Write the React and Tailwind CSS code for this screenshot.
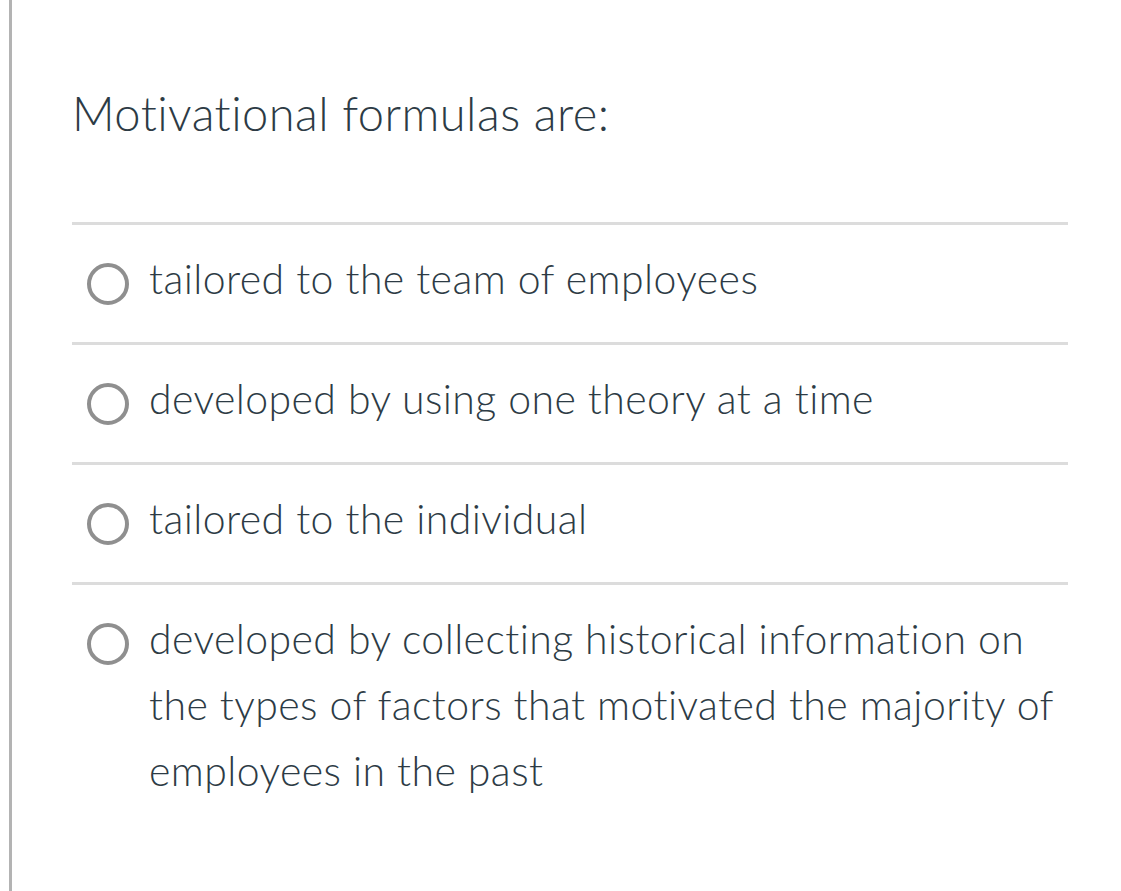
import React from 'react';

const options = [
  'tailored to the team of employees',
  'developed by using one theory at a time',
  'tailored to the individual',
  'developed by collecting historical information on the types of factors that motivated the majority of employees in the past',
];

export default function App() {
  return (
    <div className="flex min-h-[891px] bg-white" style={{ fontFamily: 'Lato, "Open Sans", sans-serif' }}>
      {/* left rail */}
      <div className="ml-[9px] w-[3px] bg-[#b3b3b3] shrink-0" />

      <div className="pl-[60px] w-[1056px] text-[#2d3b45]">
        <h1 className="mt-[80px] text-[47px] leading-[66px] font-light tracking-[0.45px]">Motivational formulas are:</h1>

        <div className="mt-[76px]">
          {options.map((text, i) => (
            <label
              key={i}
              className="flex items-start border-t-[3px] border-[#dcdcdc] pt-[21px] pb-[30px] cursor-pointer"
            >
              <span className="mt-[17px] ml-[15px] mr-[20px] w-[42px] h-[42px] shrink-0 rounded-full border-[4px] border-[#8f8f8f] bg-white" />
              <span className="text-[41px] leading-[66px] font-light tracking-[0.42px] pr-[10px]">{text}</span>
            </label>
          ))}
        </div>
      </div>
    </div>
  );
}
